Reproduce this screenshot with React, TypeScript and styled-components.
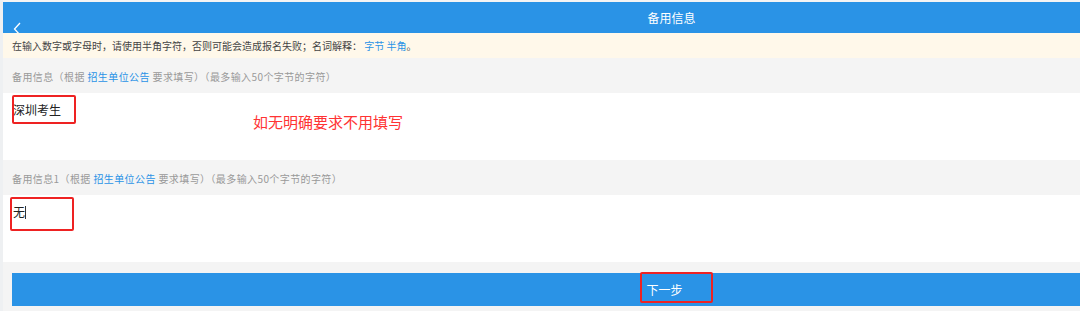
import React from "react";
import styled, { createGlobalStyle } from "styled-components";

const Global = createGlobalStyle`
  html, body { margin: 0; padding: 0; background: #f4f4f4; }
  body { font-family: "Noto Sans CJK SC", "Noto Sans", sans-serif; overflow: hidden; }
  * { box-sizing: border-box; }
`;

const BLUE = "#2a93e6";

const Page = styled.div`
  width: 1080px;
  height: 311px;
  padding: 2px 0 0 3px;
  background: linear-gradient(to right, #eef0f2 0, #eef0f2 3px, #f4f4f4 3px);
  display: flex;
  flex-direction: column;
  position: relative;
  overflow: hidden;
`;

const Header = styled.header`
  height: 31px;
  background: ${BLUE};
  display: flex;
  align-items: center;
  justify-content: center;
  padding-left: 260px;
  position: relative;
  overflow: hidden;
`;

const Title = styled.h1`
  margin: 0;
  font-size: 12px;
  font-weight: 400;
  color: #fff;
  line-height: 1;
`;

const Back = styled.span`
  position: absolute;
  left: 10px;
  top: 20px;
  display: flex;
`;

const Notice = styled.div`
  height: 25px;
  background: #fff8ea;
  display: flex;
  align-items: center;
  padding-left: 9px;
  font-size: 10px;
  color: #444;
`;

const Link = styled.span`
  color: ${BLUE};
`;

const LabelBar = styled.div`
  height: 35px;
  display: flex;
  align-items: flex-end;
  padding: 0 0 9px 9px;
  font-size: 10px;
  letter-spacing: 0.4px;
  color: #999;
`;

const Field = styled.div`
  height: 67px;
  background: #fff;
  padding: 8px 0 0 10px;
  font-size: 12px;
  color: #222;
  line-height: 18px;
  display: flex;
  align-items: flex-start;
`;

const Caret = styled.span`
  display: inline-block;
  width: 1px;
  height: 13px;
  background: #333;
  margin-top: 3px;
`;

const Gap = styled.div`
  height: 11px;
`;

const NextButton = styled.button`
  margin-left: 9px;
  height: 33px;
  border: none;
  border-radius: 0;
  background: ${BLUE};
  color: #fff;
  font-family: inherit;
  font-size: 12px;
  display: flex;
  align-items: center;
  justify-content: center;
  padding: 0 0 0 237px;
  width: 1068px;
`;

const RedBox = styled.div<{ $x: number; $y: number; $w: number; $h: number }>`
  position: absolute;
  left: ${(p) => p.$x}px;
  top: ${(p) => p.$y}px;
  width: ${(p) => p.$w}px;
  height: ${(p) => p.$h}px;
  border: 2px solid #ee2222;
  border-radius: 2px;
  pointer-events: none;
`;

const Annotation = styled.div`
  position: absolute;
  left: 253px;
  top: 112px;
  font-size: 15px;
  line-height: 20px;
  color: #ff3333;
`;

export default function App() {
  return (
    <>
      <Global />
      <Page>
        <Header>
          <Back>
            <svg width="8" height="14" viewBox="0 0 8 14">
              <path d="M7 1 L1.5 7 L7 13" fill="none" stroke="#fff" strokeWidth="1.3" />
            </svg>
          </Back>
          <Title>备用信息</Title>
        </Header>
        <Notice>
          在输入数字或字母时，请使用半角字符，否则可能会造成报名失败；名词解释：&nbsp;<Link>字节 半角</Link>。
        </Notice>
        <LabelBar>
          备用信息（根据&nbsp;<Link>招生单位公告</Link>&nbsp;要求填写）（最多输入50个字节的字符）
        </LabelBar>
        <Field>深圳考生</Field>
        <LabelBar>
          备用信息1（根据&nbsp;<Link>招生单位公告</Link>&nbsp;要求填写）（最多输入50个字节的字符）
        </LabelBar>
        <Field>
          无<Caret />
        </Field>
        <Gap />
        <NextButton>下一步</NextButton>
        <RedBox $x={12} $y={95} $w={64} $h={29} />
        <RedBox $x={10} $y={197} $w={64} $h={34} />
        <RedBox $x={640} $y={272} $w={73} $h={31} />
        <Annotation>如无明确要求不用填写</Annotation>
      </Page>
    </>
  );
}
